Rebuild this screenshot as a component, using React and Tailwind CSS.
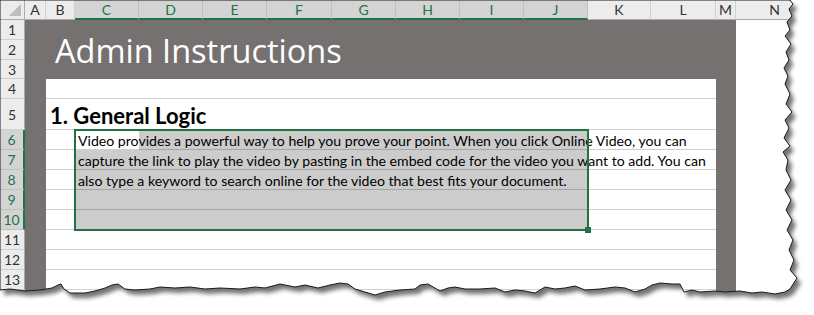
import React from 'react';

const GREEN = 'border-[#217346]';

const colHeaders = [
  { l: 'A', sel: false },
  { l: 'B', sel: false },
  { l: 'C', sel: true },
  { l: 'D', sel: true },
  { l: 'E', sel: true },
  { l: 'F', sel: true },
  { l: 'G', sel: true },
  { l: 'H', sel: true },
  { l: 'I', sel: true },
  { l: 'J', sel: true },
  { l: 'K', sel: false },
  { l: 'L', sel: false },
  { l: 'M', sel: false },
  { l: 'N', sel: false },
];

const rowHeaders = [
  { n: 1, pos: 'row-start-2' },
  { n: 2, pos: 'row-start-3' },
  { n: 3, pos: 'row-start-4' },
  { n: 4, pos: 'row-start-5' },
  { n: 5, pos: 'row-start-6' },
  { n: 6, pos: 'row-start-7', sel: true },
  { n: 7, pos: 'row-start-8', sel: true },
  { n: 8, pos: 'row-start-9', sel: true },
  { n: 9, pos: 'row-start-10', sel: true },
  { n: 10, pos: 'row-start-11', sel: true },
  { n: 11, pos: 'row-start-12' },
  { n: 12, pos: 'row-start-13' },
  { n: 13, pos: 'row-start-14' },
  { n: 14, pos: 'row-start-15' },
];

// white area rows (4..14) that carry a bottom border
const lineRows = [
  'row-start-5', 'row-start-6', 'row-start-7', 'row-start-8', 'row-start-9', 'row-start-10',
  'row-start-11', 'row-start-12', 'row-start-13', 'row-start-14', 'row-start-15',
];

const bodyLines = [
  { pos: 'row-start-7', text: 'Video provides a powerful way to help you prove your point. When you click Online Video, you can' },
  { pos: 'row-start-8', text: 'capture the link to play the video by pasting in the embed code for the video you want to add. You can' },
  { pos: 'row-start-9', text: 'also type a keyword to search online for the video that best fits your document.' },
];

// torn paper edge
const rightEdge = [
  [790, 0], [793, 4], [789, 9], [792, 16], [787, 22], [790, 30], [785, 36], [791, 44], [786, 52],
  [789, 60], [784, 68], [788, 76], [785, 84], [790, 94], [786, 104], [792, 112], [785, 120],
  [789, 128], [784, 138], [790, 146], [783, 152], [788, 160], [786, 170], [791, 180], [785, 190],
  [791, 200], [786, 210], [792, 220], [787, 230], [793, 240], [789, 250], [794, 260], [790, 270],
  [797, 278],
];
const bottomEdge = [
  [0, 290], [10, 289], [25, 291], [40, 290], [52, 288], [58, 285], [61, 284], [64, 289], [70, 293],
  [85, 293], [95, 291], [105, 288], [112, 285], [118, 284], [125, 289], [135, 290], [150, 289],
  [160, 287], [175, 288], [190, 287], [205, 289], [220, 288], [240, 289], [255, 287], [265, 288],
  [280, 284], [295, 287], [305, 285], [318, 288], [330, 285], [340, 283], [348, 284], [355, 289],
  [365, 292], [375, 295], [385, 292], [400, 290], [415, 289], [420, 285], [428, 284], [440, 291],
  [448, 288], [455, 287], [465, 289], [480, 289], [495, 288], [505, 292], [515, 290], [525, 291],
  [535, 293], [545, 287], [555, 289], [565, 288], [575, 286], [585, 290], [600, 289], [615, 287],
  [625, 288], [635, 292], [645, 289], [652, 285], [660, 283], [672, 284], [680, 284], [684, 292],
  [692, 290], [700, 292], [715, 291], [725, 292], [740, 291], [752, 293], [762, 292], [775, 294],
  [785, 292], [790, 289],
];
const pagePts = [[0, 0], ...rightEdge, ...bottomEdge.slice().reverse()];
const pagePath = 'M' + pagePts.map(p => p.join(' ')).join(' L') + ' Z';
const outsidePath = 'M0 0 H814 V315 H0 Z ' + pagePath;

function TornEdge() {
  return (
    <svg className="absolute inset-0 pointer-events-none" width="814" height="315" viewBox="0 0 814 315">
      <defs>
        <filter id="tearBlur" x="-5%" y="-5%" width="110%" height="110%">
          <feGaussianBlur stdDeviation="2.2" />
        </filter>
        <clipPath id="outside">
          <path d={outsidePath} clipRule="evenodd" />
        </clipPath>
      </defs>
      <path d={outsidePath} fill="#ffffff" fillRule="evenodd" />
      <g clipPath="url(#outside)">
        <path d={pagePath} transform="translate(4 5)" fill="rgba(0,0,0,0.55)" filter="url(#tearBlur)" />
      </g>
      <path d={pagePath} fill="none" stroke="#1a1a1a" strokeWidth="1" />
    </svg>
  );
}

export default function App() {
  return (
    <div className="relative w-[814px] h-[315px] overflow-hidden bg-white font-['Lato',sans-serif]">
      <div className="grid h-full grid-cols-[25px_21px_29px_64px_64px_64px_65px_64px_64px_64px_64px_63px_65px_20px_1fr] grid-rows-[20px_20px_20px_19px_20px_31px_20px_20px_20px_20px_20px_20px_20px_20px_1fr]">
        {/* corner */}
        <div className="col-start-1 row-start-1 bg-[#ececec] border-r border-b border-[#ababab] flex items-end justify-end pr-[3px] pb-[3px]">
          <div className="w-0 h-0 border-l-[12px] border-l-transparent border-b-[12px] border-b-[#bdbdbd]" />
        </div>

        {/* column headers */}
        {colHeaders.map(c => (
          <div
            key={c.l}
            className={
              'row-start-1 flex items-center justify-center text-[14px] border-r ' +
              (c.sel
                ? 'bg-[#d4d4d4] text-[#217346] border-r-[#c0c0c0] border-b-2 ' + GREEN
                : 'bg-[#ececec] text-[#333333] border-r-[#d0d0d0] border-b border-b-[#ababab]')
            }
          >
            {c.l}
          </div>
        ))}

        {/* row headers */}
        {rowHeaders.map(r => (
          <div
            key={r.n}
            className={
              'col-start-1 ' + r.pos + ' flex items-center justify-center text-[14px] border-b ' +
              (r.sel
                ? 'bg-[#d4d4d4] text-[#217346] border-b-[#c0c0c0] border-r-2 ' + GREEN
                : 'bg-[#ececec] text-[#333333] border-b-[#d0d0d0] border-r border-r-[#ababab]')
            }
          >
            {r.n}
          </div>
        ))}

        {/* dark band + side strips */}
        <div className="col-start-2 col-end-15 row-start-2 row-end-5 bg-[#767171]" />
        <div className="col-start-2 row-start-5 row-end-16 bg-[#767171]" />
        <div className="col-start-14 row-start-5 row-end-16 bg-[#767171]" />

        {/* white area row lines */}
        {lineRows.map(p => (
          <div key={p} className={'col-start-3 col-end-14 ' + p + ' border-b border-[#d0d0d0]'} />
        ))}

        {/* title */}
        <div className="col-start-3 col-end-15 row-start-2 row-end-5 flex items-center pl-[9px] pt-[3px] text-white text-[32.5px] font-['Open_Sans',sans-serif] whitespace-nowrap">
          Admin Instructions
        </div>

        {/* heading */}
        <div className="col-start-3 col-end-13 row-start-6 flex items-end pl-[4px] pb-[3px] text-[22px] leading-none font-bold text-black whitespace-nowrap">
          1. General Logic
        </div>

        {/* selection shading */}
        <div className="col-start-5 col-end-12 row-start-7 bg-black/20" />
        <div className="col-start-4 col-end-12 row-start-8 row-end-12 bg-black/20" />

        {/* body text */}
        {bodyLines.map(l => (
          <div key={l.pos} className={'col-start-4 col-end-14 ' + l.pos + ' flex items-center pl-[3px] pt-px text-[14.1px] text-black whitespace-nowrap'}>
            {l.text}
          </div>
        ))}

        {/* selection border */}
        <div className="relative col-start-4 col-end-12 row-start-7 row-end-12 -m-px border-2 border-[#217346]">
          <div className="absolute -right-[4px] -bottom-[4px] w-[6px] h-[6px] bg-[#217346]" />
        </div>
      </div>
      <TornEdge />
    </div>
  );
}
